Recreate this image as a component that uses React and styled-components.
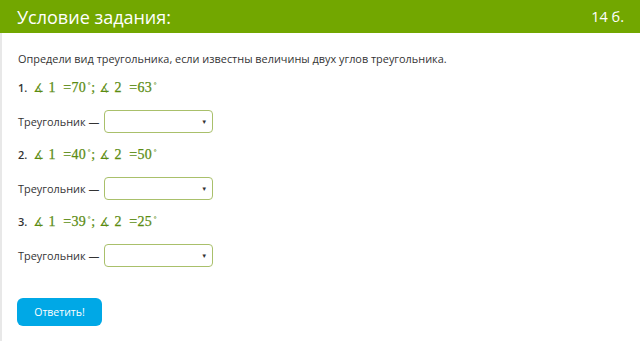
import React from "react";
import styled, { createGlobalStyle } from "styled-components";

const GlobalStyle = createGlobalStyle`
  html, body {
    margin: 0;
    padding: 0;
    background: #ffffff;
  }
  body {
    font-family: "Open Sans", "Noto Sans", sans-serif;
  }
`;

const Page = styled.div`
  width: 640px;
  height: 341px;
  overflow: hidden;
  background: #ffffff;
`;

const Header = styled.div`
  height: 33px;
  background: #72a700;
  color: #ffffff;
  display: flex;
  align-items: center;
  justify-content: space-between;
  padding: 0 16px 0 17px;
`;

const Title = styled.h1`
  margin: 0;
  font-size: 18px;
  font-weight: 400;
`;

const Points = styled.span`
  font-size: 14.5px;
`;

const Body = styled.div`
  border-left: 2px solid #e8e8e8;
  padding: 17px 0 0 16px;
  height: 308px;
  box-sizing: border-box;
  display: flex;
  flex-direction: column;
  align-items: flex-start;
`;

const Text = styled.p`
  margin: 0;
  font-size: 10.9px;
  line-height: 18px;
  color: #333333;
`;

const Task = styled.div`
  margin-top: ${(p) => (p.first ? "11px" : "13px")};
  height: 18px;
  line-height: 18px;
  font-size: 11px;
  color: #333333;
  white-space: pre;
`;

const Num = styled.span`
  font-weight: 600;
  margin-right: 6px;
`;

const Math = styled.span`
  font-family: "Liberation Serif", "DejaVu Serif", serif;
  font-size: 14px;
  letter-spacing: 0.3px;
  color: #5b8c12;
  -webkit-text-stroke: 0.25px #5b8c12;
`;

const AngleSign = styled.span`
  font-family: "DejaVu Sans", sans-serif;
  font-size: 12px;
  -webkit-text-stroke: 0;
  margin-right: 4px;
`;

const Sup = styled.sup`
  font-size: 8px;
  line-height: 0;
  vertical-align: 6px;
  margin-left: 1px;
  -webkit-text-stroke: 0;
`;

const Row = styled.div`
  margin-top: 13px;
  display: flex;
  align-items: center;
  font-size: 10.9px;
  color: #333333;
  gap: 5px;
`;

const Select = styled.div`
  width: 109px;
  height: 23px;
  box-sizing: border-box;
  border: 1.5px solid #a9c06b;
  border-radius: 4px;
  background: #ffffff;
  display: flex;
  align-items: center;
  justify-content: flex-end;
  padding-right: 5px;
  font-size: 6px;
  color: #333333;
`;

const Button = styled.button`
  margin-top: 31px;
  margin-left: -1px;
  width: 85px;
  height: 28px;
  border: none;
  border-radius: 6px;
  background: #00a8e6;
  color: #ffffff;
  font-family: "Open Sans", "Noto Sans", sans-serif;
  font-size: 10.5px;
  cursor: pointer;
`;

const tasks = [
  ["70", "63"],
  ["40", "50"],
  ["39", "25"],
];

const Angle = ({ n, v }) => (
  <>
    <AngleSign>∡</AngleSign>
    {n + "  =" + v}
    <Sup>∘</Sup>
  </>
);

const App = () => {
  return (
    <Page>
      <GlobalStyle />
      <Header>
        <Title>Условие задания:</Title>
        <Points>14 б.</Points>
      </Header>
      <Body>
        <Text>Определи вид треугольника, если известны величины двух углов треугольника.</Text>
        {tasks.map((t, i) => (
          <React.Fragment key={i}>
            <Task first={i === 0}>
              <Num>{i + 1}.</Num>
              <Math>
                <Angle n="1" v={t[0]} />
                {"; "}
                <Angle n="2" v={t[1]} />
              </Math>
            </Task>
            <Row>
              Треугольник —
              <Select>▼</Select>
            </Row>
          </React.Fragment>
        ))}
        <Button>Ответить!</Button>
      </Body>
    </Page>
  );
};

export default App;
